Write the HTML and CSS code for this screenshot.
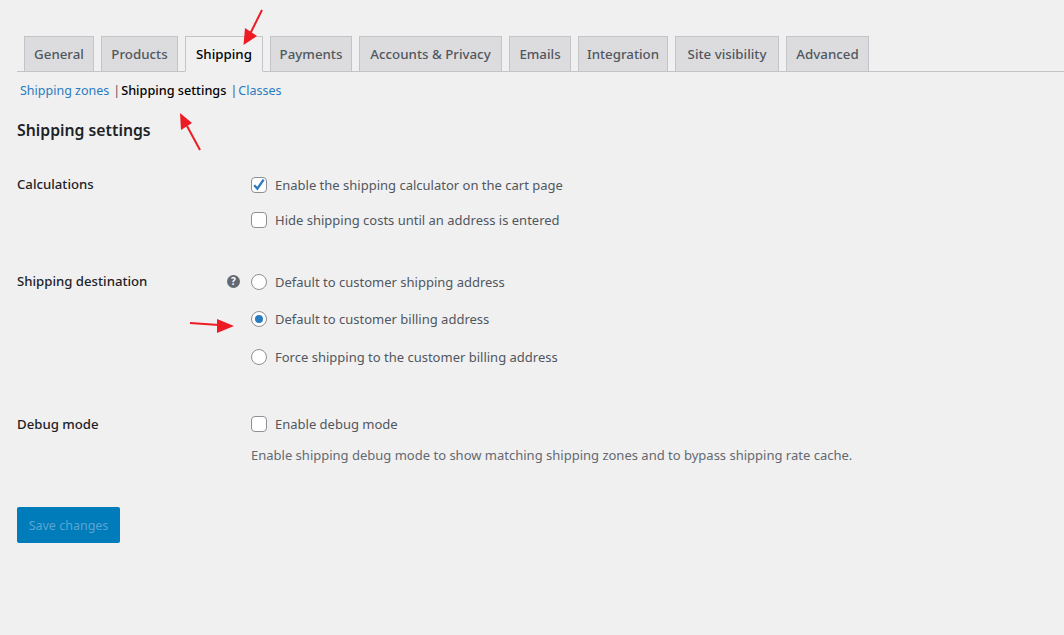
FILE: index.html
```html
<!DOCTYPE html>
<html lang="en">
<head>
<meta charset="utf-8">
<title>Shipping settings</title>
<link rel="stylesheet" href="styles.css">
</head>
<body>
<main class="wrap">
  <nav class="tabs">
    <a class="tab">General</a>
    <a class="tab">Products</a>
    <a class="tab active">Shipping</a>
    <a class="tab">Payments</a>
    <a class="tab">Accounts &amp; Privacy</a>
    <a class="tab">Emails</a>
    <a class="tab">Integration</a>
    <a class="tab">Site visibility</a>
    <a class="tab">Advanced</a>
  </nav>
  <div class="subnav">
    <a class="sublink">Shipping zones</a><span class="sep">|</span><strong class="subcurrent">Shipping settings</strong><span class="sep">|</span><a class="sublink">Classes</a>
  </div>
  <h2 class="title">Shipping settings</h2>

  <section class="row row-calc">
    <div class="label">Calculations</div>
    <div class="fields fields-calc">
      <label class="opt"><span class="box checked"><svg viewBox="0 0 16 16" width="16" height="16"><path d="M3.200 8.200 6.400 11.600 12.600 2.600" fill="none" stroke="#2b7bc0" stroke-width="2.400"/></svg></span>Enable the shipping calculator on the cart page</label>
      <label class="opt"><span class="box"></span>Hide shipping costs until an address is entered</label>
    </div>
  </section>

  <section class="row row-dest">
    <div class="label label-help">Shipping destination<span class="help">?</span></div>
    <div class="fields fields-dest">
      <label class="opt"><span class="radio"></span>Default to customer shipping address</label>
      <label class="opt"><span class="radio on"></span>Default to customer billing address</label>
      <label class="opt opt-last"><span class="radio"></span>Force shipping to the customer billing address</label>
    </div>
  </section>

  <section class="row row-debug">
    <div class="label label-debug">Debug mode</div>
    <div class="fields">
      <label class="opt"><span class="box"></span>Enable debug mode</label>
      <p class="desc">Enable shipping debug mode to show matching shipping zones and to bypass shipping rate cache.</p>
    </div>
  </section>

  <button class="save" type="button">Save changes</button>
</main>

<svg class="arrow arrow-tab" width="30" height="40" viewBox="0 0 30 40"><path d="M20 1 7 27" stroke="#ed1c24" stroke-width="2"/><path d="M1.500 36 3 19 15 27Z" fill="#ed1c24"/></svg>
<svg class="arrow arrow-sub" width="30" height="44" viewBox="0 0 30 44"><path d="M21 38 8 14" stroke="#ed1c24" stroke-width="2"/><path d="M1 1 2 18 13 11Z" fill="#ed1c24"/></svg>
<svg class="arrow arrow-radio" width="46" height="16" viewBox="0 0 46 16"><path d="M1 5 30 7" stroke="#ed1c24" stroke-width="2"/><path d="M45 8 28 1 28 15Z" fill="#ed1c24"/></svg>
</body>
</html>
```
FILE: styles.css
```css
* { box-sizing: border-box; }
html, body { margin: 0; height: 100%; }
body {
  background: #f0f0f1;
  color: #50575e;
  font-family: "Noto Sans", "Open Sans", sans-serif;
  font-size: 13px;
  overflow: hidden;
}
.wrap { padding: 36px 0 0 17px; }
.tabs {
  display: grid;
  grid-template-columns: 70px 77px 78px 82px 143px 62px 90px 104px 83px;
  justify-content: start;
  column-gap: 7px;
  height: 36px;
  padding-left: 7px;
  border-bottom: 1px solid #c3c4c7;
}
.tab {
  height: 36px;
  display: flex;
  align-items: center;
  justify-content: center;
  background: #dcdcde;
  border: 1px solid #c3c4c7;
  color: #50575e;
  font-size: 13.300px;
  font-weight: 500;
  white-space: nowrap;
}
.tab.active {
  background: #f0f0f1;
  border-bottom-color: #f0f0f1;
  color: #000;
}
.subnav {
  display: flex;
  height: 20px;
  margin-top: 8px;
  padding-left: 3px;
  align-items: center;
  font-size: 12.500px;
  white-space: nowrap;
}
.sublink { color: #2b7bc0; }
.subcurrent { color: #000; font-size: 12.700px; font-weight: 500; }
.sep { margin: 0 1px 0 4px; color: #50575e; }
.title {
  margin: 18px 0 0;
  color: #1d2327;
  font-size: 15.800px;
  font-weight: 600;
  line-height: 24px;
}
.row { display: flex; }
.row-calc { margin-top: 33px; }
.row-dest { margin-top: 42px; }
.row-debug { margin-top: 47px; }
.label {
  position: relative;
  width: 234px;
  flex: none;
  margin-top: -1px;
  color: #1d2327;
  font-size: 13.200px;
  font-weight: 500;
  line-height: 20px;
}
.label-debug { margin-top: 0; }
.help {
  position: absolute;
  left: 210px;
  top: 4px;
  width: 13px;
  height: 13px;
  border-radius: 50%;
  background: #646970;
  color: #fff;
  font-size: 10px;
  font-weight: 700;
  line-height: 13px;
  text-align: center;
}
.fields { display: flex; flex-direction: column; gap: 17px; }
.fields-calc { gap: 15px; }
.opt { display: flex; align-items: center; height: 20px; gap: 8px; white-space: nowrap; }
.opt-last { margin-top: 1px; }
.box, .radio {
  width: 16px;
  height: 16px;
  flex: none;
  background: #fff;
  border: 1px solid #8c8f94;
}
.box { border-radius: 4px; display: flex; align-items: center; justify-content: center; }
.box svg { display: block; flex: none; }
.radio { border-radius: 50%; position: relative; }
.radio.on::after {
  content: "";
  position: absolute;
  left: 3px;
  top: 3px;
  width: 8px;
  height: 8px;
  border-radius: 50%;
  background: #2b7bc0;
}
.desc { margin: -6px 0 0; color: #646970; line-height: 20px; }
.save {
  display: block;
  width: 103px;
  height: 36px;
  margin-top: 42px;
  padding: 0;
  background: #007cba;
  border: none;
  border-radius: 2px;
  color: #5ba5d1;
  font-family: inherit;
  font-size: 12.500px;
}
.arrow { position: absolute; }
.arrow-tab { left: 242px; top: 9px; }
.arrow-sub { left: 179px; top: 112px; }
.arrow-radio { left: 189px; top: 318px; }
```
